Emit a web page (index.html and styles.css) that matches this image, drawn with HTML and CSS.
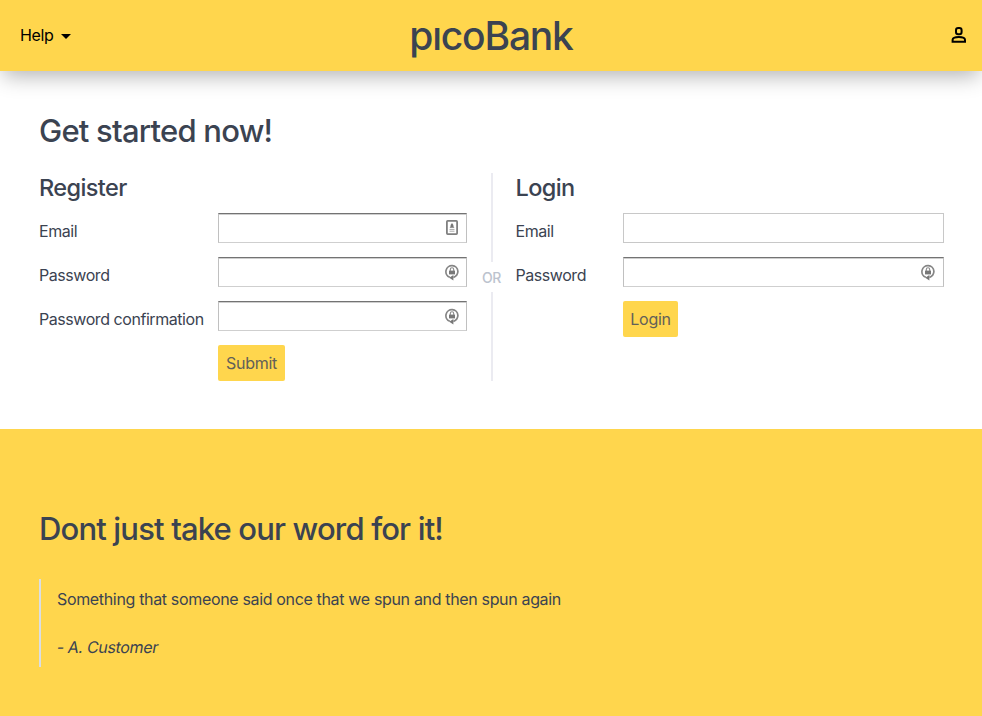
FILE: index.html
```html
<!DOCTYPE html>
<html lang="en">
<head>
<meta charset="utf-8">
<title>picoBank</title>
<link rel="stylesheet" href="styles.css">
</head>
<body>
<svg class="defs" width="0" height="0" aria-hidden="true">
  <symbol id="lock" viewBox="0 0 14 18">
    <path d="M4.8 13.3A6 6 0 1 1 12.9 7.2Q12.9 11.4 8.4 13.6" fill="none" stroke="#858585" stroke-width="1.7"/>
    <path d="M8.4 11V16.6L4.2 13.8Z" fill="#777"/>
    <path d="M4 6.6h6v3.8H4z" fill="#777"/>
    <path d="M5.3 7V5.4a1.7 1.7 0 0 1 3.4 0V7" fill="none" stroke="#888" stroke-width="1.1"/>
  </symbol>
</svg>
<header class="navbar">
  <a class="help"><span>Help</span><i class="caret"></i></a>
  <a class="brand">pıcoBank</a>
  <a class="account"><svg width="16" height="16" viewBox="0 0 16 16" fill="none" stroke="#000" stroke-width="2"><rect x="5" y="1" width="5.6" height="6.2" rx="2.2"/><path d="M1.6 14.8V12.8Q1.8 10 7.8 10T14 12.8V14.8Z"/></svg></a>
</header>
<main class="start">
  <h2 class="title">Get started now!</h2>
  <div class="columns">
    <form class="form register">
      <h4>Register</h4>
      <div class="row"><label>Email</label><div class="field inset"><svg class="card" width="12" height="15" viewBox="0 0 12 15"><rect x=".9" y=".9" width="10.2" height="13.2" rx=".8" fill="none" stroke="#808080" stroke-width="1.8"/><path d="M6 3L7.4 5.1V6.2L8.4 7.8H3.6L4.6 6.2V5.1Z" fill="#777"/><path d="M3.5 9.4h5M3.5 11.2h5" stroke="#aaa"/></svg></div></div>
      <div class="row"><label>Password</label><div class="field inset"><svg class="lock" width="14" height="18"><use href="#lock"/></svg></div></div>
      <div class="row"><label>Password confirmation</label><div class="field inset"><svg class="lock" width="14" height="18"><use href="#lock"/></svg></div></div>
      <div class="row"><span></span><button type="button" class="submit">Submit</button></div>
    </form>
    <div class="divider"><span>OR</span></div>
    <form class="form login">
      <h4>Login</h4>
      <div class="row"><label>Email</label><div class="field"></div></div>
      <div class="row"><label>Password</label><div class="field inset"><svg class="lock" width="14" height="18"><use href="#lock"/></svg></div></div>
      <div class="row"><span></span><button type="button">Login</button></div>
    </form>
  </div>
</main>
<section class="praise">
  <h2 class="praise-title">Dont just take our word for it!</h2>
  <blockquote>
    <p>Something that someone said once that we spun and then spun again</p>
    <cite>- A. Customer</cite>
  </blockquote>
</section>
</body>
</html>
```
FILE: styles.css
```css
* { box-sizing: border-box; }
body {
  margin: 0;
  height: 716px;
  overflow: hidden;
  display: flex;
  flex-direction: column;
  background: #fff;
  color: #3b4351;
  font: 16px/24px Inter, "Liberation Sans", sans-serif;
  letter-spacing: -0.34px;
}
.defs { position: absolute; }
h2, h4, p, blockquote { margin: 0; font-weight: 550; }
p { font-weight: 400; }
.navbar {
  position: relative;
  flex: none;
  height: 71px;
  padding: 0 20px;
  display: grid;
  grid-template-columns: 1fr auto 1fr;
  align-items: center;
  background: #ffd64d;
  color: #000;
  box-shadow: 0 8px 20px -3px rgba(0, 0, 0, .3);
}
.help { display: flex; align-items: center; gap: 7px; margin-top: -1px; }
.caret { border: 5px solid transparent; border-top-color: #000; border-bottom: 0; margin-top: 2px; }
.brand { color: #3b4351; font-size: 39px; line-height: 48px; font-weight: 550; letter-spacing: -1.2px; }
.account { justify-self: end; height: 17px; margin-right: -5px; }
.account svg { display: block; }
.start { flex: none; height: 358px; padding: 40px 38px 0 39px; }
.title, .praise-title { font-size: 31px; line-height: 40px; letter-spacing: -0.77px; }
.praise-title { letter-spacing: -0.84px; }
.columns { display: grid; grid-template-columns: 428px 49px 428px; margin-top: 22px; height: 208px; }
.form h4 { font-size: 23.5px; line-height: 30px; height: 40px; letter-spacing: -0.6px; }
.row { display: grid; height: 44px; align-items: start; }
.row:last-child { height: 36px; }
.register .row { grid-template-columns: 179px 1fr; }
.login .row { grid-template-columns: 107px 1fr; }
label { padding-top: 6px; white-space: nowrap; letter-spacing: -0.44px; }
.login label, .login h4 { margin-left: -0.5px; }
.field {
  height: 30px;
  border: 1px solid #c8c8c8;
  display: flex;
  justify-content: flex-end;
  padding: 7px 8px 0 0;
}
.inset { border-color: #737373 #c0c0c0 #cfcfcf; box-shadow: inset 0 1px #cecece; }
.field .card { margin-top: -1px; }
.field .lock { margin: -1px -1px 0 0; }
.login .field .lock { margin-right: 0; }
button {
  justify-self: start;
  width: 55px;
  height: 36px;
  padding: 0;
  border: 0;
  border-radius: 2px;
  background: #ffd64d;
  color: #626059;
  font: inherit;
  letter-spacing: -0.3px;
}
.submit { width: 67px; }
.login .lock { margin-right: 0; }
.divider { display: flex; flex-direction: column; align-items: center; font-size: 14px; line-height: 30px; color: #bcc3ce; font-weight: 450; }
.divider span { height: 30px; padding-top: 1px; letter-spacing: -0.4px; }
.divider::before, .divider::after { content: ""; width: 2px; background: #ebebf1; }
.divider::before { height: 89px; }
.divider::after { flex: 1; }
.praise { flex: 1; background: #ffd64d; padding: 80px 39px 0; }
blockquote { height: 88px; margin-top: 30px; padding: 8px 16px; border-left: 2px solid #dadee4; }
cite { display: block; width: 110px; margin-top: 24px; font-weight: 400; font-style: normal; transform: skewX(-10deg); }
```
